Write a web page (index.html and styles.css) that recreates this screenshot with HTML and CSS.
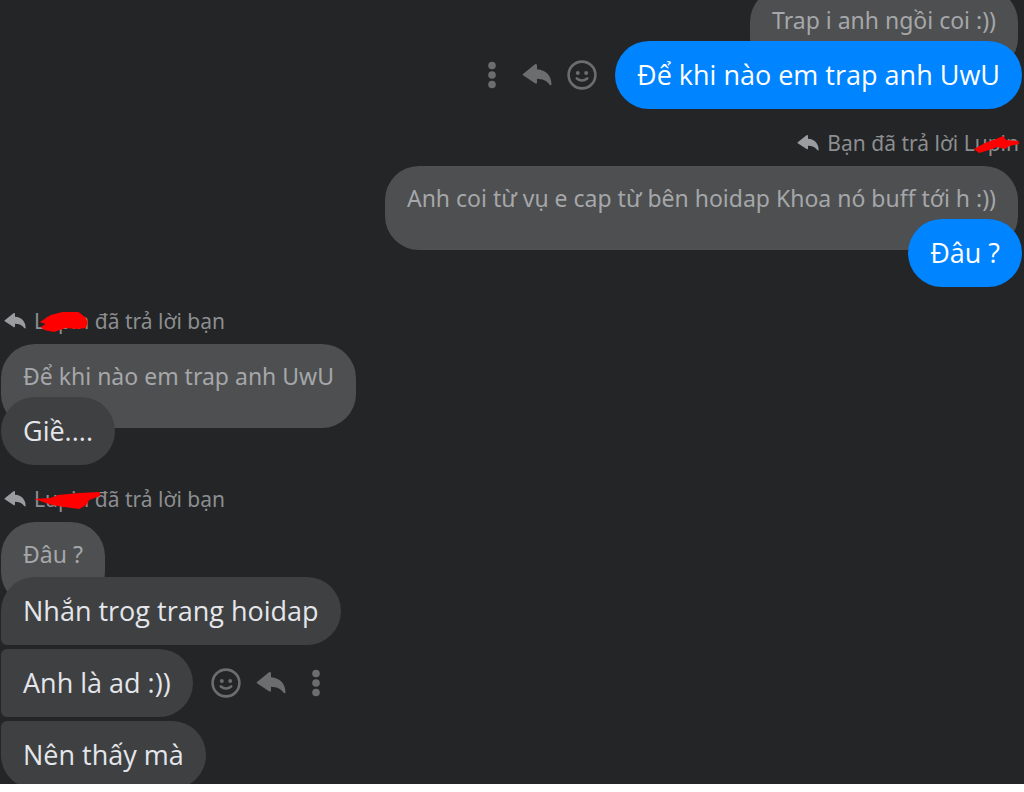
FILE: index.html
```html
<!DOCTYPE html>
<html lang="vi">
  <head>
    <meta charset="UTF-8" />
    <meta name="viewport" content="width=device-width, initial-scale=1" />
    <title>Chat</title>
    <link rel="stylesheet" href="styles.css" />
  </head>
  <body>
    <svg class="sprite" aria-hidden="true">
      <symbol id="icon-reply" viewBox="0 0 30 24">
        <path d="M1 11 L13 1.3 Q15 .3 15 2.5 V6.2 C24 6.8 29.5 12.5 29.5 21.5 Q29 23 27.6 21.7 C24.5 17.5 20.5 16 15 15.8 V19.3 Q15 21.5 13 20.2 L1 12.3 Q.2 11.7 1 11Z" />
      </symbol>
      <symbol id="icon-smile" viewBox="0 0 30 30">
        <circle cx="15" cy="15" r="13.4" fill="none" stroke="currentColor" stroke-width="2.6" />
        <circle cx="10.8" cy="13" r="2" />
        <circle cx="19.2" cy="13" r="2" />
        <path d="M9.8 18.4 Q15 22.6 20.2 18.4" fill="none" stroke="currentColor" stroke-width="2.6" stroke-linecap="round" />
      </symbol>
      <symbol id="icon-more" viewBox="0 0 30 30">
        <circle cx="15" cy="5.5" r="3.8" />
        <circle cx="15" cy="15" r="3.8" />
        <circle cx="15" cy="24.5" r="3.8" />
      </symbol>
    </svg>

    <main class="chat">
      <div class="thread">
        <section class="group mine">
          <div class="quote">Trap i anh ngồi coi :))</div>
          <div class="row">
            <div class="bubble">Để khi nào em trap anh UwU</div>
            <div class="actions">
              <button aria-label="Bày tỏ cảm xúc"><svg class="icon"><use href="#icon-smile" /></svg></button>
              <button aria-label="Trả lời"><svg class="icon"><use href="#icon-reply" /></svg></button>
              <button aria-label="Xem thêm"><svg class="icon"><use href="#icon-more" /></svg></button>
            </div>
          </div>
        </section>

        <section class="group mine">
          <div class="caption">
            <svg class="caption-icon"><use href="#icon-reply" /></svg>
            <span>Bạn đã trả lời <span class="name">Lupin<svg class="scribble" viewBox="0 0 66 24" preserveAspectRatio="none"><path d="M12 18 L25 12 L38 8 L47 5 L50 9 L65 10 L66 13 L54 15 L49 18 L40 16 L30 19 L18 22Z" /></svg></span></span>
          </div>
          <div class="quote">Anh coi từ vụ e cap từ bên hoidap Khoa nó buff tới h :))</div>
          <div class="row">
            <div class="bubble">Đâu ?</div>
          </div>
        </section>

        <section class="group">
          <div class="caption">
            <svg class="caption-icon"><use href="#icon-reply" /></svg>
            <span><span class="name">Lupin<svg class="scribble" viewBox="0 0 66 24" preserveAspectRatio="none"><path d="M7 13 L20 6 L34 3 L53 3 L61 8 L64 13 L62 19 L52 20 L38 19 L24 23 L12 21 L8 18 L14 15Z" /></svg></span> đã trả lời bạn</span>
          </div>
          <div class="quote">Để khi nào em trap anh UwU</div>
          <div class="row">
            <div class="bubble">Giề....</div>
          </div>
        </section>

        <section class="group stacked">
          <div class="caption">
            <svg class="caption-icon"><use href="#icon-reply" /></svg>
            <span><span class="name">Lupin<svg class="scribble wide" viewBox="0 0 66 24" preserveAspectRatio="none"><path d="M0 12 L16 11 L24 8 L45 6 L66 5 L66 9 L55 13 L52 18 L45 22 L30 20 L18 18 L9 15Z" /></svg></span> đã trả lời bạn</span>
          </div>
          <div class="quote">Đâu ?</div>
          <div class="row">
            <div class="bubble first">Nhắn trog trang hoidap</div>
          </div>
          <div class="row">
            <div class="bubble middle">Anh là ad :))</div>
            <div class="actions">
              <button aria-label="Bày tỏ cảm xúc"><svg class="icon"><use href="#icon-smile" /></svg></button>
              <button aria-label="Trả lời"><svg class="icon"><use href="#icon-reply" /></svg></button>
              <button aria-label="Xem thêm"><svg class="icon"><use href="#icon-more" /></svg></button>
            </div>
          </div>
          <div class="row">
            <div class="bubble last">Nên thấy mà</div>
          </div>
        </section>
      </div>
    </main>
  </body>
</html>
```
FILE: styles.css
```css
:root {
  --bg: #242526;
  --bubble: #3e4042;
  --quote: #4e4f50;
  --blue: #0084ff;
  --muted: #8c8e91;
  --radius: 34px;
  --small: 6px;
}
* {
  box-sizing: border-box;
}
body {
  margin: 0;
  background: #fff;
  font-family: "Noto Sans", "Open Sans", sans-serif;
}
.sprite {
  display: none;
}
.chat {
  display: flex;
  flex-direction: column;
  justify-content: flex-end;
  height: calc(100vh - 8px);
  overflow: hidden;
  background: var(--bg);
}
/* scrolled so that the newest bubble is slightly cut off */
.thread {
  display: flex;
  flex-direction: column;
  gap: 22px;
  margin-bottom: -5px;
  padding: 0 2px 0 1px;
}
.group {
  display: flex;
  flex-direction: column;
  align-items: flex-start;
  gap: 4px;
}
.group.mine {
  align-items: flex-end;
}
.caption {
  display: flex;
  align-items: center;
  gap: 8px;
  height: 24px;
  margin-bottom: 7px;
  padding: 0 3px;
  color: var(--muted);
  font-size: 21px;
  line-height: 24px;
  white-space: nowrap;
}
.caption-icon {
  width: 22px;
  height: 18px;
  fill: #9a9c9f;
}
.name {
  position: relative;
}
.scribble {
  position: absolute;
  top: 2px;
  left: 0;
  width: 100%;
  height: 24px;
  fill: #f00;
}
.scribble.wide {
  width: 120%;
}
.quote {
  height: 84px;
  margin-bottom: -35px;
  padding: 16px 22px;
  border-radius: var(--radius);
  background: var(--quote);
  color: #a5a7aa;
  font-size: 23px;
  line-height: 32px;
  white-space: nowrap;
}
.mine .quote {
  margin-right: 4px;
}
.stacked .quote {
  margin-bottom: -33px;
}
.row {
  display: flex;
  align-items: center;
  gap: 18px;
  z-index: 1;
}
.mine .row {
  flex-direction: row-reverse;
}
.bubble {
  padding: 16px 22px;
  border-radius: var(--radius);
  background: var(--bubble);
  color: #e4e6eb;
  font-family: "Open Sans", "Noto Sans", sans-serif;
  font-size: 27px;
  line-height: 36px;
  white-space: nowrap;
}
.mine .bubble {
  background: var(--blue);
  color: #fff;
}
.bubble.first {
  border-bottom-left-radius: var(--small);
}
.bubble.middle {
  border-top-left-radius: var(--small);
  border-bottom-left-radius: var(--small);
}
.bubble.last {
  border-top-left-radius: var(--small);
}
.actions {
  display: flex;
  gap: 15px;
}
.mine .actions {
  flex-direction: row-reverse;
}
.actions button {
  display: flex;
  align-items: center;
  width: 30px;
  height: 30px;
  padding: 0;
  border: none;
  background: none;
  color: #6b6d6f;
  cursor: pointer;
}
.actions button:hover {
  color: #b0b3b8;
}
.icon {
  width: 30px;
  height: 30px;
  fill: currentColor;
}
```
